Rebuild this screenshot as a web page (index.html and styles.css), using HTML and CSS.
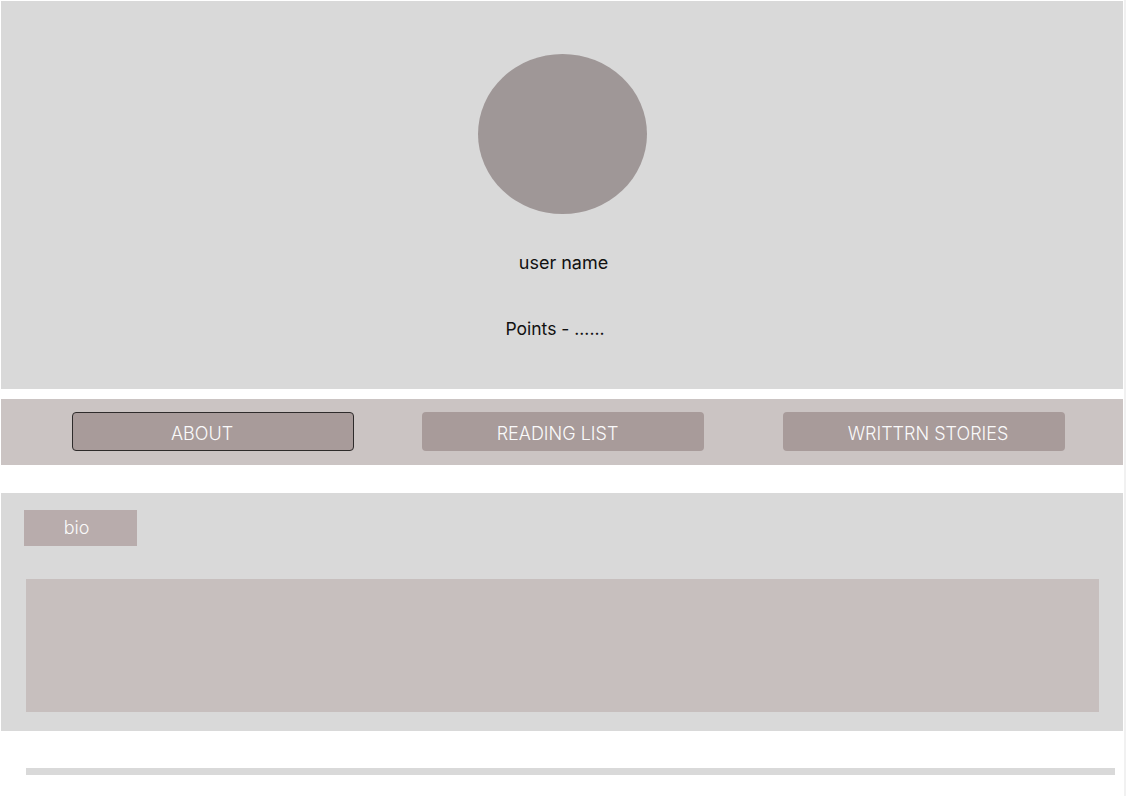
FILE: index.html
```html
<!DOCTYPE html>
<html lang="en">
<head>
<meta charset="utf-8">
<title>Profile</title>
<link rel="stylesheet" href="styles.css">
</head>
<body>
<div class="page">
  <header class="profile">
    <div class="avatar"></div>
    <div class="username">user name</div>
    <div class="points">Points - ......</div>
  </header>
  <nav class="tabs">
    <button class="tab tab-active">ABOUT</button>
    <button class="tab tab-reading">READING LIST</button>
    <button class="tab tab-stories">WRITTRN STORIES</button>
  </nav>
  <section class="about">
    <div class="bio-label">bio</div>
    <div class="bio-box"></div>
  </section>
  <div class="divider"></div>
</div>
<div class="rail"></div>
</body>
</html>
```
FILE: styles.css
```css
html, body {
  margin: 0;
  padding: 0;
  background: #ffffff;
  height: 100%;
}
body {
  display: flex;
  font-family: Inter, "Liberation Sans", sans-serif;
  overflow: hidden;
}
.page {
  width: 1122px;
  margin-left: 1px;
  padding-top: 1px;
  display: flex;
  flex-direction: column;
}
.rail {
  flex: 1;
  margin-left: 1px;
  background: #f1f1f1;
}
.profile {
  height: 388px;
  background: #d9d9d9;
  display: flex;
  flex-direction: column;
  align-items: center;
  box-sizing: border-box;
  padding-top: 53px;
}
.avatar {
  width: 169px;
  height: 160px;
  border-radius: 50%;
  background: #9f9797;
  margin-left: 1px;
}
.username {
  margin-top: 38px;
  font-size: 18px;
  line-height: 22px;
  color: #111;
  margin-left: 3px;
}
.points {
  margin-top: 44px;
  font-size: 17.5px;
  line-height: 22px;
  color: #111;
  margin-left: -14px;
}
.tabs {
  margin-top: 10px;
  height: 66px;
  background: #cbc4c3;
  display: flex;
  align-items: flex-start;
  padding-left: 71px;
  padding-top: 13px;
  box-sizing: border-box;
}
.tab {
  width: 282px;
  height: 39px;
  border: none;
  border-radius: 4px;
  background: #a89b9a;
  color: #fafafa;
  font-family: Inter, "Liberation Sans", sans-serif;
  font-size: 18px;
  font-weight: 350;
  padding: 3px 0 0 0;
  box-sizing: border-box;
}
.tab-active {
  border: 1px solid #2e2b2b;
  padding-right: 22px;
}
.tab-reading {
  margin-left: 68px;
  padding-right: 11px;
}
.tab-stories {
  margin-left: 79px;
  padding-left: 8px;
}
.about {
  margin-top: 28px;
  height: 238px;
  background: #d9d9d9;
  box-sizing: border-box;
  padding: 17px 23px 0 23px;
}
.bio-label {
  width: 113px;
  height: 36px;
  background: #b8acac;
  color: #fafafa;
  font-size: 18px;
  font-weight: 350;
  display: flex;
  align-items: center;
  justify-content: center;
  box-sizing: border-box;
  padding-right: 8px;
  padding-bottom: 2px;
}
.bio-box {
  margin-top: 33px;
  margin-left: 2px;
  width: 1073px;
  height: 133px;
  background: #c7bfbe;
}
.divider {
  margin-top: 37px;
  margin-left: 25px;
  width: 1089px;
  height: 7px;
  background: #d9d9d9;
}
```
